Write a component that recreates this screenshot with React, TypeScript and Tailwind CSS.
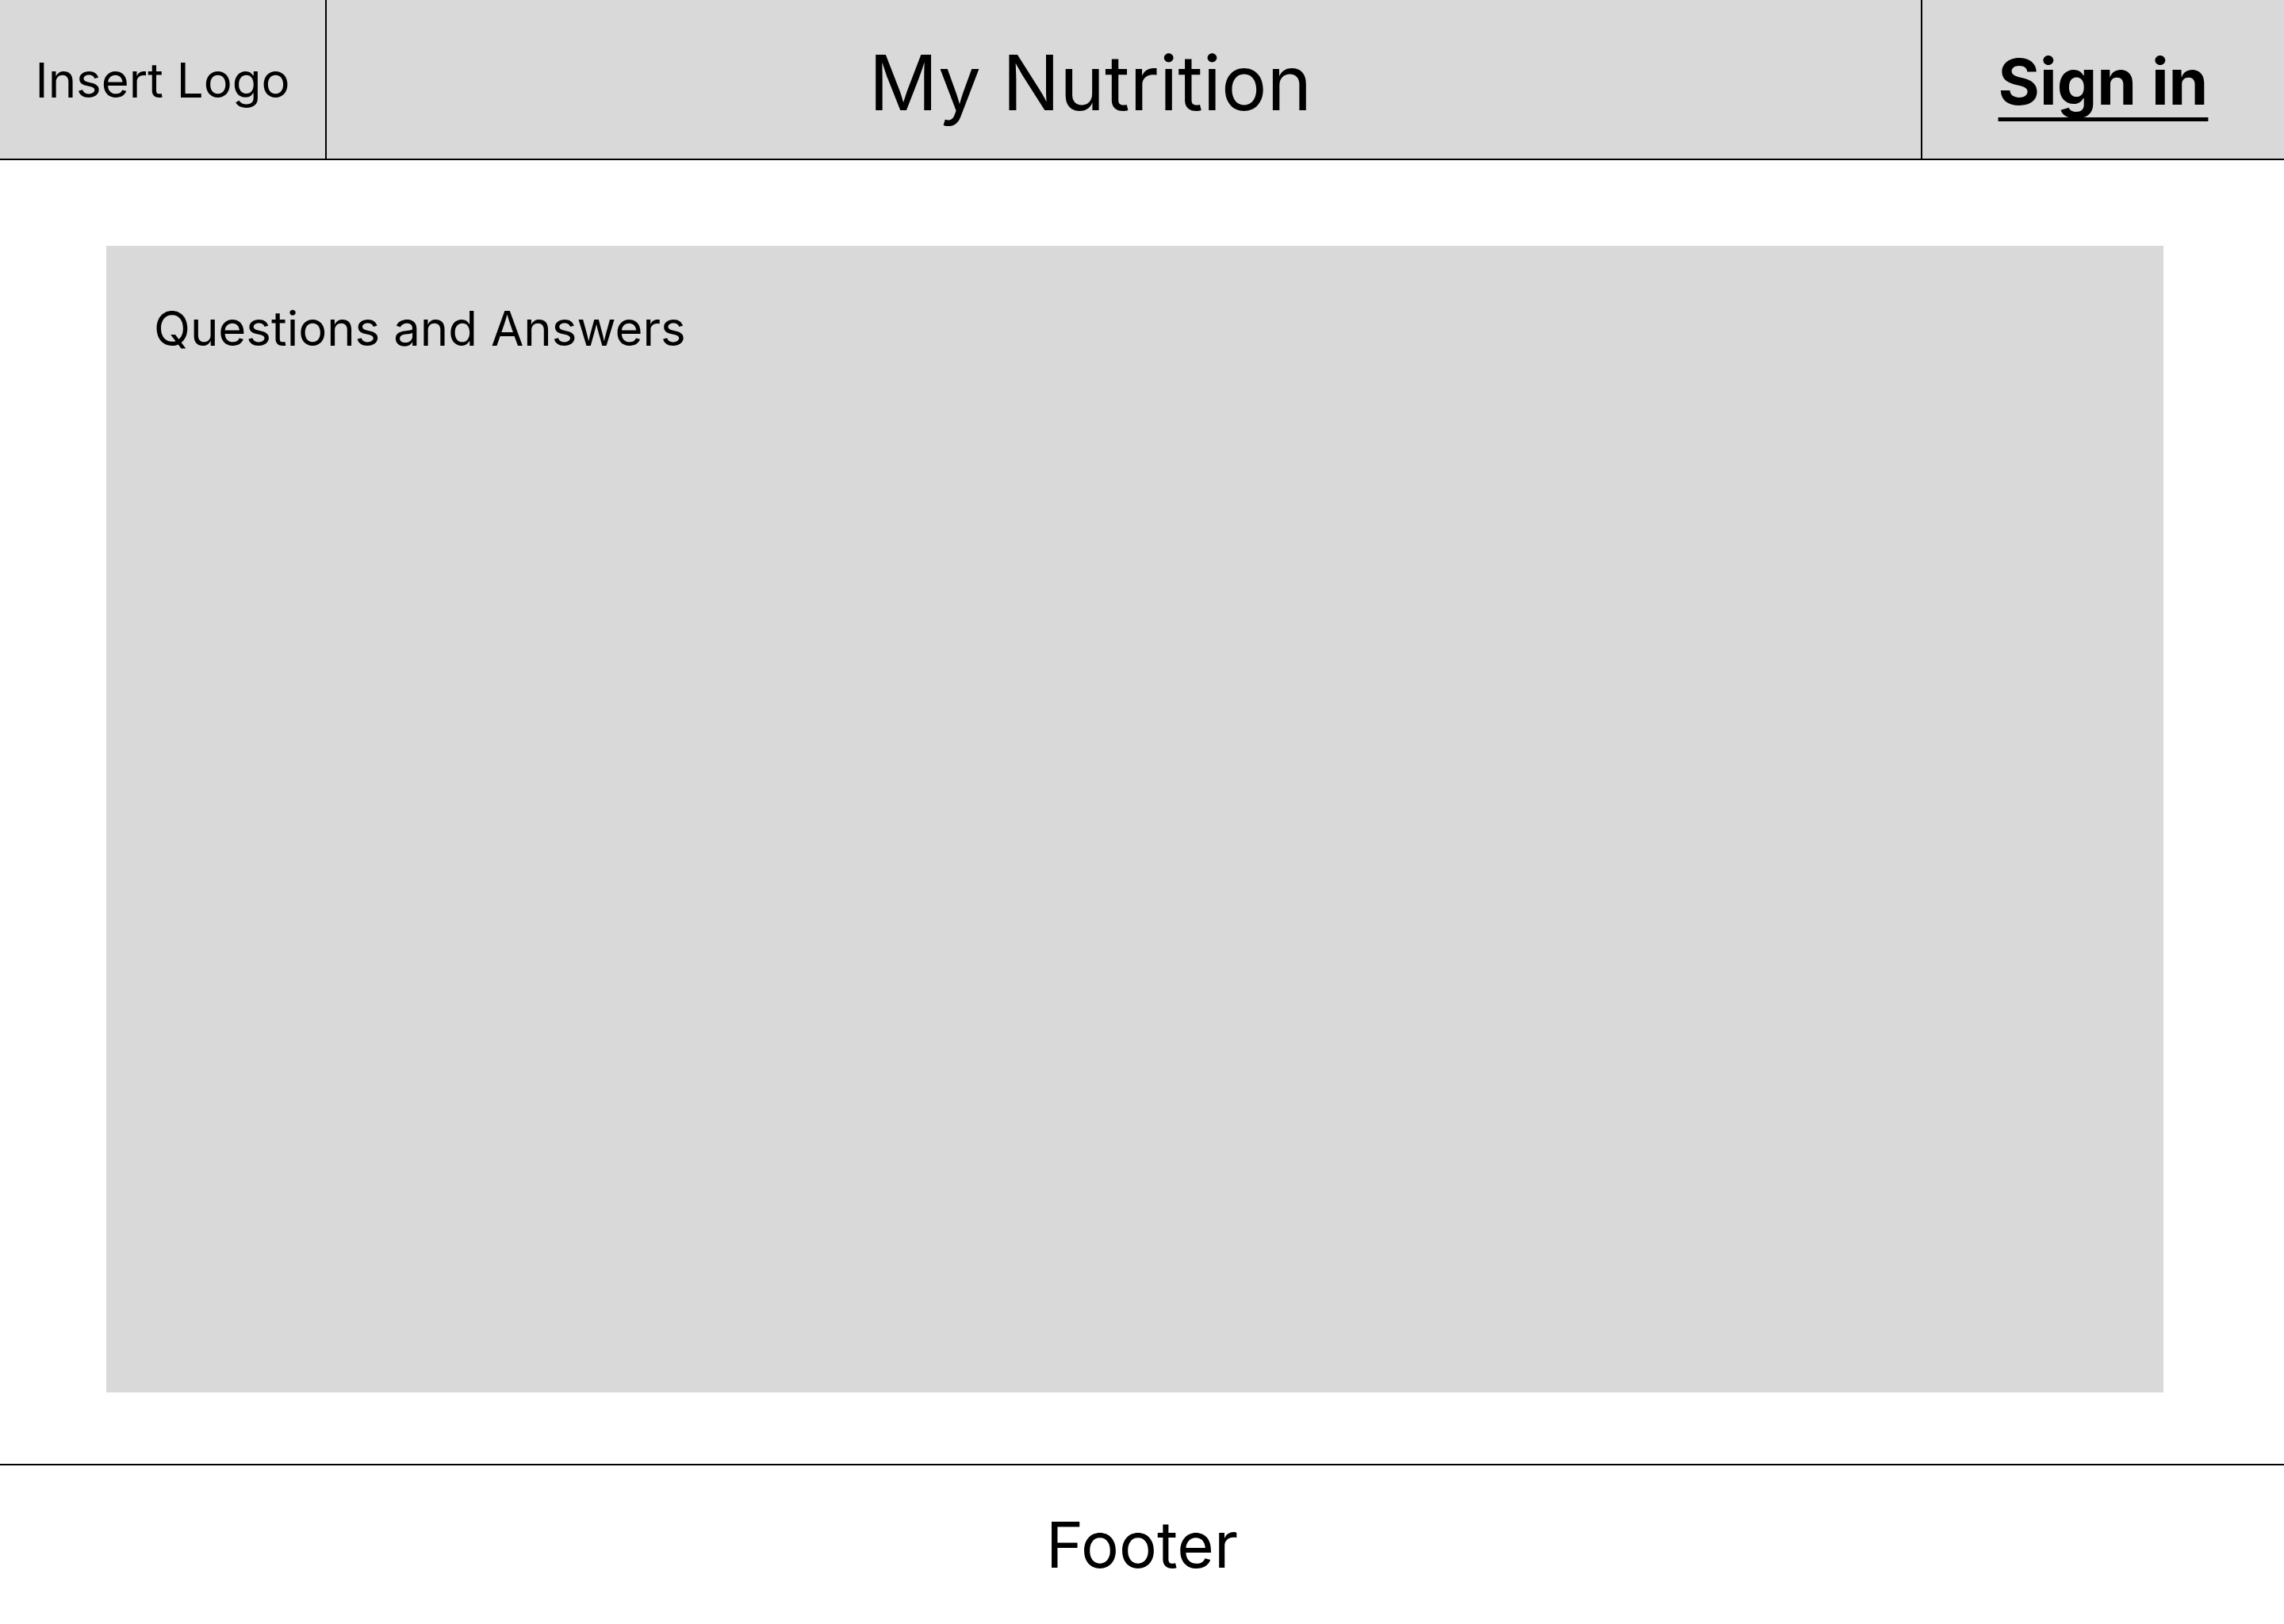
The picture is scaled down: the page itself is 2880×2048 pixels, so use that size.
export default function App() {
  return (
    <div className="flex h-[2048px] w-[2880px] flex-col bg-white text-black font-['Inter',sans-serif]">
      <header className="flex h-[202px] shrink-0 border-b-2 border-black bg-[#d9d9d9]">
        <div className="flex w-[412px] shrink-0 items-center justify-center border-r-2 border-black pt-[2px]">
          <span className="text-[60px] leading-none">Insert Logo</span>
        </div>
        <div className="flex flex-1 items-center justify-center pr-[84px] pt-[8px]">
          <h1 className="text-[96px] leading-none">My Nutrition</h1>
        </div>
        <div className="flex w-[458px] shrink-0 items-center justify-center border-l-2 border-black pt-[6px]">
          <a
            href="#"
            className="text-[80px] font-bold leading-none underline decoration-[5px] underline-offset-[16px] [text-decoration-skip-ink:none]"
          >
            Sign in
          </a>
        </div>
      </header>

      <main className="flex-1 pl-[134px] pr-[152px] pt-[108px]">
        <section className="h-[1446px] bg-[#d9d9d9] pl-[60px] pt-[59px]">
          <h2 className="text-[60px]">Questions and Answers</h2>
        </section>
      </main>

      <footer className="flex h-[202px] shrink-0 items-center justify-center border-t-2 border-black">
        <p className="text-[80px] leading-none">Footer</p>
      </footer>
    </div>
  );
}
